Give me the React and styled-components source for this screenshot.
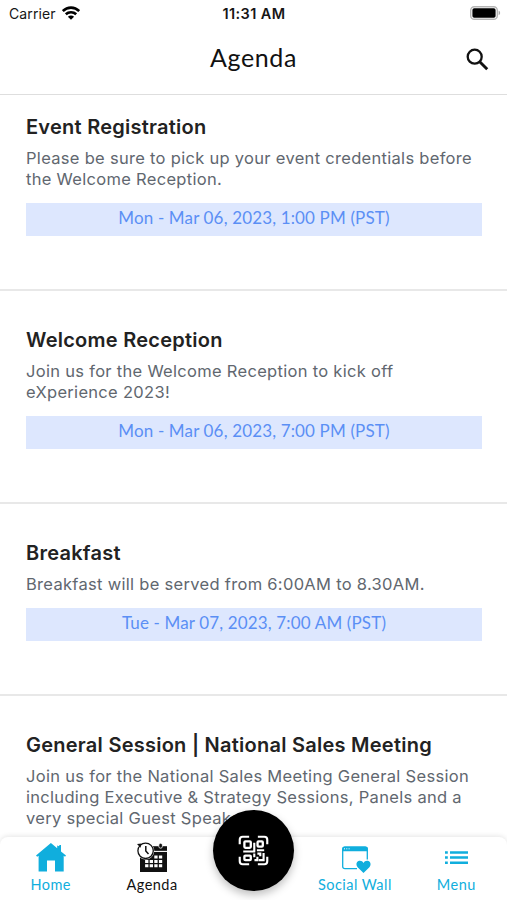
import React from "react";
import styled, { createGlobalStyle } from "styled-components";

const GlobalStyle = createGlobalStyle`
  * {
    box-sizing: border-box;
  }

  body {
    margin: 0;
    background: #fff;
    font-family: Inter, "Liberation Sans", sans-serif;
  }
`;

const Screen = styled.div`
  position: relative;
  width: 507px;
  height: 900px;
  display: flex;
  flex-direction: column;
  overflow: hidden;
  background: #fff;
`;

// status bar
const StatusBar = styled.div`
  height: 26px;
  flex-shrink: 0;
  display: grid;
  grid-template-columns: 1fr auto 1fr;
  align-items: center;
  padding: 0 6px 0 9px;
  color: #161616;
  font-size: 14px;
`;

const Carrier = styled.div`
  display: flex;
  align-items: center;
  gap: 6px;
  letter-spacing: 0.1px;
`;

const Clock = styled.div`
  margin-right: 2px;
  font-size: 14.5px;
  font-weight: 600;
  letter-spacing: 0.4px;
`;

const BatterySlot = styled.div`
  display: flex;
  justify-content: flex-end;
`;

// title bar
const Header = styled.header`
  height: 69px;
  flex-shrink: 0;
  display: grid;
  grid-template-columns: 1fr auto 1fr;
  align-items: center;
  padding: 0 18px 5px;
  border-bottom: 1px solid #dedede;
`;

const HeaderTitle = styled.h1`
  grid-column: 2;
  margin: 0 0 2px;
  color: #111;
  font-family: Lato, sans-serif;
  font-size: 25px;
  font-weight: 400;
  line-height: 30px;
  letter-spacing: 0.6px;
`;

const SearchButton = styled.button`
  justify-self: end;
  display: flex;
  margin-top: 3px;
  padding: 0;
  border: 0;
  background: none;
`;

// agenda list
const List = styled.main`
  flex: 1;
  min-height: 0;
  overflow: hidden;
`;

const Session = styled.section`
  padding: ${({ $first }) => ($first ? "19px" : "36px")} 25px 53px 26px;
  border-bottom: 2px solid #e8e8e8;
`;

const SessionTitle = styled.h2`
  margin: 0 0 8px;
  color: #222;
  font-size: 20px;
  font-weight: 600;
  line-height: 26px;
  letter-spacing: 0.25px;
  white-space: nowrap;
`;

const SessionText = styled.p`
  margin: 0;
  color: #61676f;
  font-size: 16.5px;
  line-height: 21px;
  letter-spacing: 0.3px;
  white-space: pre-line;
`;

const SessionDate = styled.div`
  height: 33px;
  margin-top: 13px;
  background: #dde7fe;
  color: #5b8ff5;
  font-family: Lato, sans-serif;
  font-size: 17px;
  line-height: 30px;
  letter-spacing: 0.15px;
  text-align: center;
`;

// bottom navigation
const TabBar = styled.nav`
  position: absolute;
  left: 0;
  right: 0;
  bottom: 0;
  height: 63px;
  display: grid;
  grid-template-columns: repeat(5, 1fr);
  border-radius: 8px 8px 0 0;
  background: #fff;
  box-shadow: 0 -1px 5px rgba(0, 0, 0, 0.1);
`;

const Tab = styled.div`
  display: flex;
  flex-direction: column;
  align-items: center;
  padding-top: 4px;
  color: ${({ $active }) => ($active ? "#111" : "#10aedd")};
`;

const TabLabel = styled.span`
  margin-top: 2px;
  font-family: Lato, sans-serif;
  font-size: 14.5px;
  line-height: 20px;
  letter-spacing: 0.45px;
  white-space: nowrap;
`;

const ScanButton = styled.button`
  position: absolute;
  left: 213px;
  bottom: 9px;
  width: 81px;
  height: 81px;
  display: flex;
  align-items: center;
  justify-content: center;
  padding: 0;
  border: 0;
  border-radius: 50%;
  background: #000;
  box-shadow: 0 4px 8px rgba(0, 0, 0, 0.25);
`;

const WifiIcon = () => (
  <svg width="18" height="14" viewBox="0 0 18 14" fill="none" stroke="#000" strokeWidth="2.6">
    <path d="M0.8 5.1C5.4 0.4 12.6 0.4 17.2 5.1" />
    <path d="M3.8 8.3C6.7 5.5 11.3 5.5 14.2 8.3" />
    <path d="M9 13.8L5.9 10.7C7.7 9.1 10.3 9.1 12.1 10.7Z" fill="#000" stroke="none" />
  </svg>
);

const BatteryIcon = () => (
  <svg width="31" height="14" viewBox="0 0 31 14">
    <rect x="0.7" y="0.7" width="26.6" height="12.6" rx="3.6" fill="#fff" stroke="#b5b5b5" strokeWidth="1.4" />
    <rect x="2.4" y="2.2" width="23.2" height="9.6" rx="1.8" fill="#000" />
    <path d="M28.6 4.8C30.6 5.4 30.6 8.6 28.6 9.2Z" fill="#aaa" />
  </svg>
);

const SearchIcon = () => (
  <svg width="23" height="23" viewBox="0 0 23 23" fill="none" stroke="#111" strokeWidth="2.3">
    <circle cx="8.7" cy="8.7" r="7" />
    <path d="M13.7 13.7L21.2 21.2" strokeWidth="2.9" />
  </svg>
);

const HomeIcon = () => (
  <svg width="32" height="32" viewBox="0 0 32 32" fill="currentColor">
    <path d="M15.9 2L1 14.6L2.2 15.8L3.6 14.8V30.4H12V19.4H20V30.4H28.7V14.8L30 15.8L31 14.6L26 10.4V4H24.5L24 5.2L22.2 4.6V7.2Z" />
  </svg>
);

const AgendaIcon = () => (
  <svg width="32" height="32" viewBox="0 0 32 32">
    <path d="M4 5.2H31V31H4Z" fill="#111" />
    <path d="M16 10.4H31" stroke="#fff" strokeWidth="1.1" />
    <rect x="22.8" y="2.2" width="3.6" height="5" rx="1.8" fill="#111" stroke="#fff" strokeWidth="0.8" />
    <g fill="#fff">
      <path d="M18.3 14.6h3.3v3h-3.3zM22.9 14.6h3.3v3h-3.3z" />
      <path d="M9.1 18.9h3.3v3h-3.3zM13.7 18.9h3.3v3h-3.3zM18.3 18.9h3.3v3h-3.3zM22.9 18.9h3.3v3h-3.3z" />
      <path d="M9.1 23.2h3.3v3h-3.3zM13.7 23.2h3.3v3h-3.3zM18.3 23.2h3.3v3h-3.3zM22.9 23.2h3.3v3h-3.3z" />
    </g>
    <circle cx="9.6" cy="9.8" r="8.7" fill="#fff" />
    <circle cx="9.6" cy="9.8" r="7.7" fill="#fff" stroke="#111" strokeWidth="1.3" />
    <path d="M9.8 5V10L12.5 13" fill="none" stroke="#111" strokeWidth="1.5" />
    <path d="M1 3L5.5 2.5L4.5 6.7Z" fill="#111" />
  </svg>
);

const SocialIcon = () => (
  <svg width="32" height="32" viewBox="0 0 32 32">
    <path d="M18 27.7H6Q3.7 27.7 3.7 25.5V8.5Q3.7 6.2 6 6.2H26.1Q28.3 6.2 28.3 8.5V18.5" fill="none" stroke="currentColor" strokeWidth="1.3" />
    <path d="M3.2 10.3V8Q3.2 5.6 5.7 5.6H26.2Q28.8 5.6 28.8 8V10.3Z" fill="currentColor" />
    <path d="M5 7.8h1M7.3 7.8h1M9.6 7.8h1" stroke="#fff" />
    <path d="M24.5 32L18.6 26.2C16.5 23.8 17.4 20.4 20.1 19.8C22.1 19.4 23.6 20.4 24.5 21.9C25.4 20.4 26.9 19.4 28.9 19.8C31.6 20.4 32.5 23.8 30.4 26.2Z" fill="currentColor" />
  </svg>
);

const MenuIcon = () => (
  <svg width="32" height="32" viewBox="0 0 32 32" stroke="currentColor" strokeWidth="2.5">
    <path d="M5 11.4h2.8M10 11.4h18M5 16.6h2.8M10 16.6h18M5 21.8h2.8M10 21.8h18" />
  </svg>
);

const ScanIcon = () => (
  <svg width="31" height="31" viewBox="0 0 32 32" fill="none" stroke="#fff" strokeWidth="2.2">
    <path d="M1.8 9.5V4.8Q1.8 1.8 4.8 1.8H11.5M20.5 1.8H27.2Q30.2 1.8 30.2 4.8V9.5M30.2 22.5V27.2Q30.2 30.2 27.2 30.2H20.5M11.5 30.2H4.8Q1.8 30.2 1.8 27.2V22.5" />
    <rect x="6.6" y="6.6" width="6.6" height="6.6" rx="1" strokeWidth="2.4" />
    <rect x="20.2" y="6.6" width="5.4" height="5.4" rx="1" strokeWidth="2.4" />
    <rect x="6.6" y="21.2" width="6.6" height="4.8" rx="1" strokeWidth="2.4" />
    <path d="M16.8 8V17.2M5.4 17H17.8M19.5 15.7H27M20 19.2H23V22M16.8 19V23M17 26H20V22.5M26.4 18.5V26H21.5" />
  </svg>
);

const sessions = [
  {
    title: "Event Registration",
    text: "Please be sure to pick up your event credentials before\nthe Welcome Reception.",
    date: "Mon - Mar 06, 2023, 1:00 PM (PST)",
  },
  {
    title: "Welcome Reception",
    text: "Join us for the Welcome Reception to kick off\neXperience 2023!",
    date: "Mon - Mar 06, 2023, 7:00 PM (PST)",
  },
  {
    title: "Breakfast",
    text: "Breakfast will be served from 6:00AM to 8.30AM.",
    date: "Tue - Mar 07, 2023, 7:00 AM (PST)",
  },
  {
    title: "General Session | National Sales Meeting",
    text: "Join us for the National Sales Meeting General Session\nincluding Executive & Strategy Sessions, Panels and a\nvery special Guest Speaker.",
  },
];

const App = () => {
  return (
    <>
      <GlobalStyle />
      <Screen>
        <StatusBar>
          <Carrier>
            Carrier <WifiIcon />
          </Carrier>
          <Clock>11:31 AM</Clock>
          <BatterySlot>
            <BatteryIcon />
          </BatterySlot>
        </StatusBar>
        <Header>
          <HeaderTitle>Agenda</HeaderTitle>
          <SearchButton aria-label="Search">
            <SearchIcon />
          </SearchButton>
        </Header>
        <List>
          {sessions.map(({ title, text, date }, index) => (
            <Session key={title} $first={index === 0}>
              <SessionTitle>{title}</SessionTitle>
              <SessionText>{text}</SessionText>
              {date && <SessionDate>{date}</SessionDate>}
            </Session>
          ))}
        </List>
        <TabBar>
          <Tab>
            <HomeIcon />
            <TabLabel>Home</TabLabel>
          </Tab>
          <Tab $active>
            <AgendaIcon />
            <TabLabel>Agenda</TabLabel>
          </Tab>
          <span />
          <Tab>
            <SocialIcon />
            <TabLabel>Social Wall</TabLabel>
          </Tab>
          <Tab>
            <MenuIcon />
            <TabLabel>Menu</TabLabel>
          </Tab>
        </TabBar>
        <ScanButton aria-label="Scan">
          <ScanIcon />
        </ScanButton>
      </Screen>
    </>
  );
};

export default App;
